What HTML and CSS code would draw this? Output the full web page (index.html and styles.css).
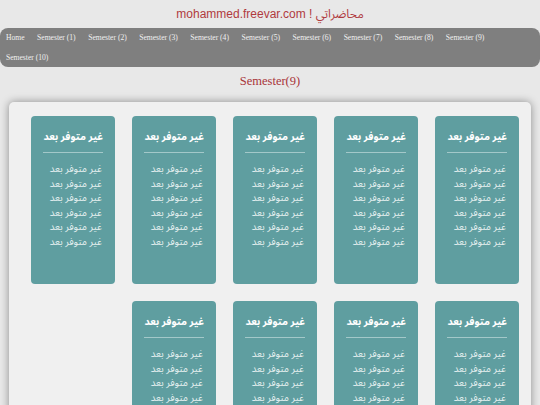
FILE: index.html
```html
<!DOCTYPE html>
<html lang="ar" dir="rtl">
<head>
<meta charset="utf-8">
<title>محاضراتي</title>
<link rel="stylesheet" href="styles.css">
</head>
<body>
<h1 class="site-title">محاضراتي ! mohammed.freevar.com</h1>
<nav class="nav" dir="ltr">
  <a class="nav-item" href="#">Home</a><a class="nav-item" href="#">Semester (1)</a><a class="nav-item" href="#">Semester (2)</a><a class="nav-item" href="#">Semester (3)</a><a class="nav-item" href="#">Semester (4)</a><a class="nav-item" href="#">Semester (5)</a><a class="nav-item" href="#">Semester (6)</a><a class="nav-item" href="#">Semester (7)</a><a class="nav-item" href="#">Semester (8)</a><a class="nav-item" href="#">Semester (9)</a><a class="nav-item" href="#">Semester (10)</a>
</nav>
<h2 class="page-title">Semester(9)</h2>
<main class="panel">
  <section class="card"><h3 class="card-title">غير متوفر بعد</h3><ul class="card-list"><li>غير متوفر بعد</li><li>غير متوفر بعد</li><li>غير متوفر بعد</li><li>غير متوفر بعد</li><li>غير متوفر بعد</li><li>غير متوفر بعد</li></ul></section>
  <section class="card"><h3 class="card-title">غير متوفر بعد</h3><ul class="card-list"><li>غير متوفر بعد</li><li>غير متوفر بعد</li><li>غير متوفر بعد</li><li>غير متوفر بعد</li><li>غير متوفر بعد</li><li>غير متوفر بعد</li></ul></section>
  <section class="card"><h3 class="card-title">غير متوفر بعد</h3><ul class="card-list"><li>غير متوفر بعد</li><li>غير متوفر بعد</li><li>غير متوفر بعد</li><li>غير متوفر بعد</li><li>غير متوفر بعد</li><li>غير متوفر بعد</li></ul></section>
  <section class="card"><h3 class="card-title">غير متوفر بعد</h3><ul class="card-list"><li>غير متوفر بعد</li><li>غير متوفر بعد</li><li>غير متوفر بعد</li><li>غير متوفر بعد</li><li>غير متوفر بعد</li><li>غير متوفر بعد</li></ul></section>
  <section class="card"><h3 class="card-title">غير متوفر بعد</h3><ul class="card-list"><li>غير متوفر بعد</li><li>غير متوفر بعد</li><li>غير متوفر بعد</li><li>غير متوفر بعد</li><li>غير متوفر بعد</li><li>غير متوفر بعد</li></ul></section>
  <section class="card"><h3 class="card-title">غير متوفر بعد</h3><ul class="card-list"><li>غير متوفر بعد</li><li>غير متوفر بعد</li><li>غير متوفر بعد</li><li>غير متوفر بعد</li><li>غير متوفر بعد</li><li>غير متوفر بعد</li></ul></section>
  <section class="card"><h3 class="card-title">غير متوفر بعد</h3><ul class="card-list"><li>غير متوفر بعد</li><li>غير متوفر بعد</li><li>غير متوفر بعد</li><li>غير متوفر بعد</li><li>غير متوفر بعد</li><li>غير متوفر بعد</li></ul></section>
  <section class="card"><h3 class="card-title">غير متوفر بعد</h3><ul class="card-list"><li>غير متوفر بعد</li><li>غير متوفر بعد</li><li>غير متوفر بعد</li><li>غير متوفر بعد</li><li>غير متوفر بعد</li><li>غير متوفر بعد</li></ul></section>
  <section class="card"><h3 class="card-title">غير متوفر بعد</h3><ul class="card-list"><li>غير متوفر بعد</li><li>غير متوفر بعد</li><li>غير متوفر بعد</li><li>غير متوفر بعد</li><li>غير متوفر بعد</li><li>غير متوفر بعد</li></ul></section>
</main>
</body>
</html>
```
FILE: styles.css
```css
html, body {
  margin: 0;
  padding: 0;
}
body {
  background: #e8e8e8;
  font-family: "Liberation Serif", serif;
}
.site-title {
  margin: 0;
  height: 28px;
  line-height: 28px;
  text-align: center;
  font-family: "Liberation Sans", "Noto Sans Arabic", sans-serif;
  font-weight: normal;
  font-size: 12px;
  color: #b03a3e;
}
.nav {
  background: #7f7f7f;
  border-radius: 8px;
  height: 39px;
  line-height: 0;
}
.nav-item {
  display: inline-block;
  font-family: "Liberation Serif", serif;
  font-size: 7.6px;
  line-height: 19.5px;
  padding: 0 6.5px 0 6px;
  color: #f0f0f0;
  text-decoration: none;
}
.page-title {
  margin: 0 0 7px 0;
  height: 28px;
  line-height: 28px;
  text-align: center;
  font-family: "Liberation Serif", serif;
  font-weight: normal;
  font-size: 12.5px;
  color: #a8353a;
}
.panel {
  margin: 0 9px;
  background: #f0f0f0;
  border-radius: 5px;
  box-shadow: 0 0 8px rgba(0, 0, 0, 0.4);
  padding: 14px 12px 20px;
  display: flex;
  flex-wrap: wrap;
  gap: 17px;
  min-height: 400px;
  align-content: flex-start;
}
.card {
  box-sizing: border-box;
  width: 84px;
  height: 168px;
  background: #5f9ea0;
  border-radius: 4px;
  padding: 13px 12px 0;
  font-family: "Noto Sans Arabic", "DejaVu Sans", sans-serif;
  color: #fff;
}
.card-title {
  margin: 0;
  padding-bottom: 7px;
  border-bottom: 1px solid #a3c8c9;
  font-size: 10.2px;
  line-height: 16px;
  font-weight: bold;
  white-space: nowrap;
}
.card-list {
  list-style: none;
  margin: 0;
  padding: 9px 0 0 0;
  font-size: 9.8px;
  line-height: 14.5px;
  color: #e6f0f0;
}
.card-list li {
  padding-right: 1px;
}
```
